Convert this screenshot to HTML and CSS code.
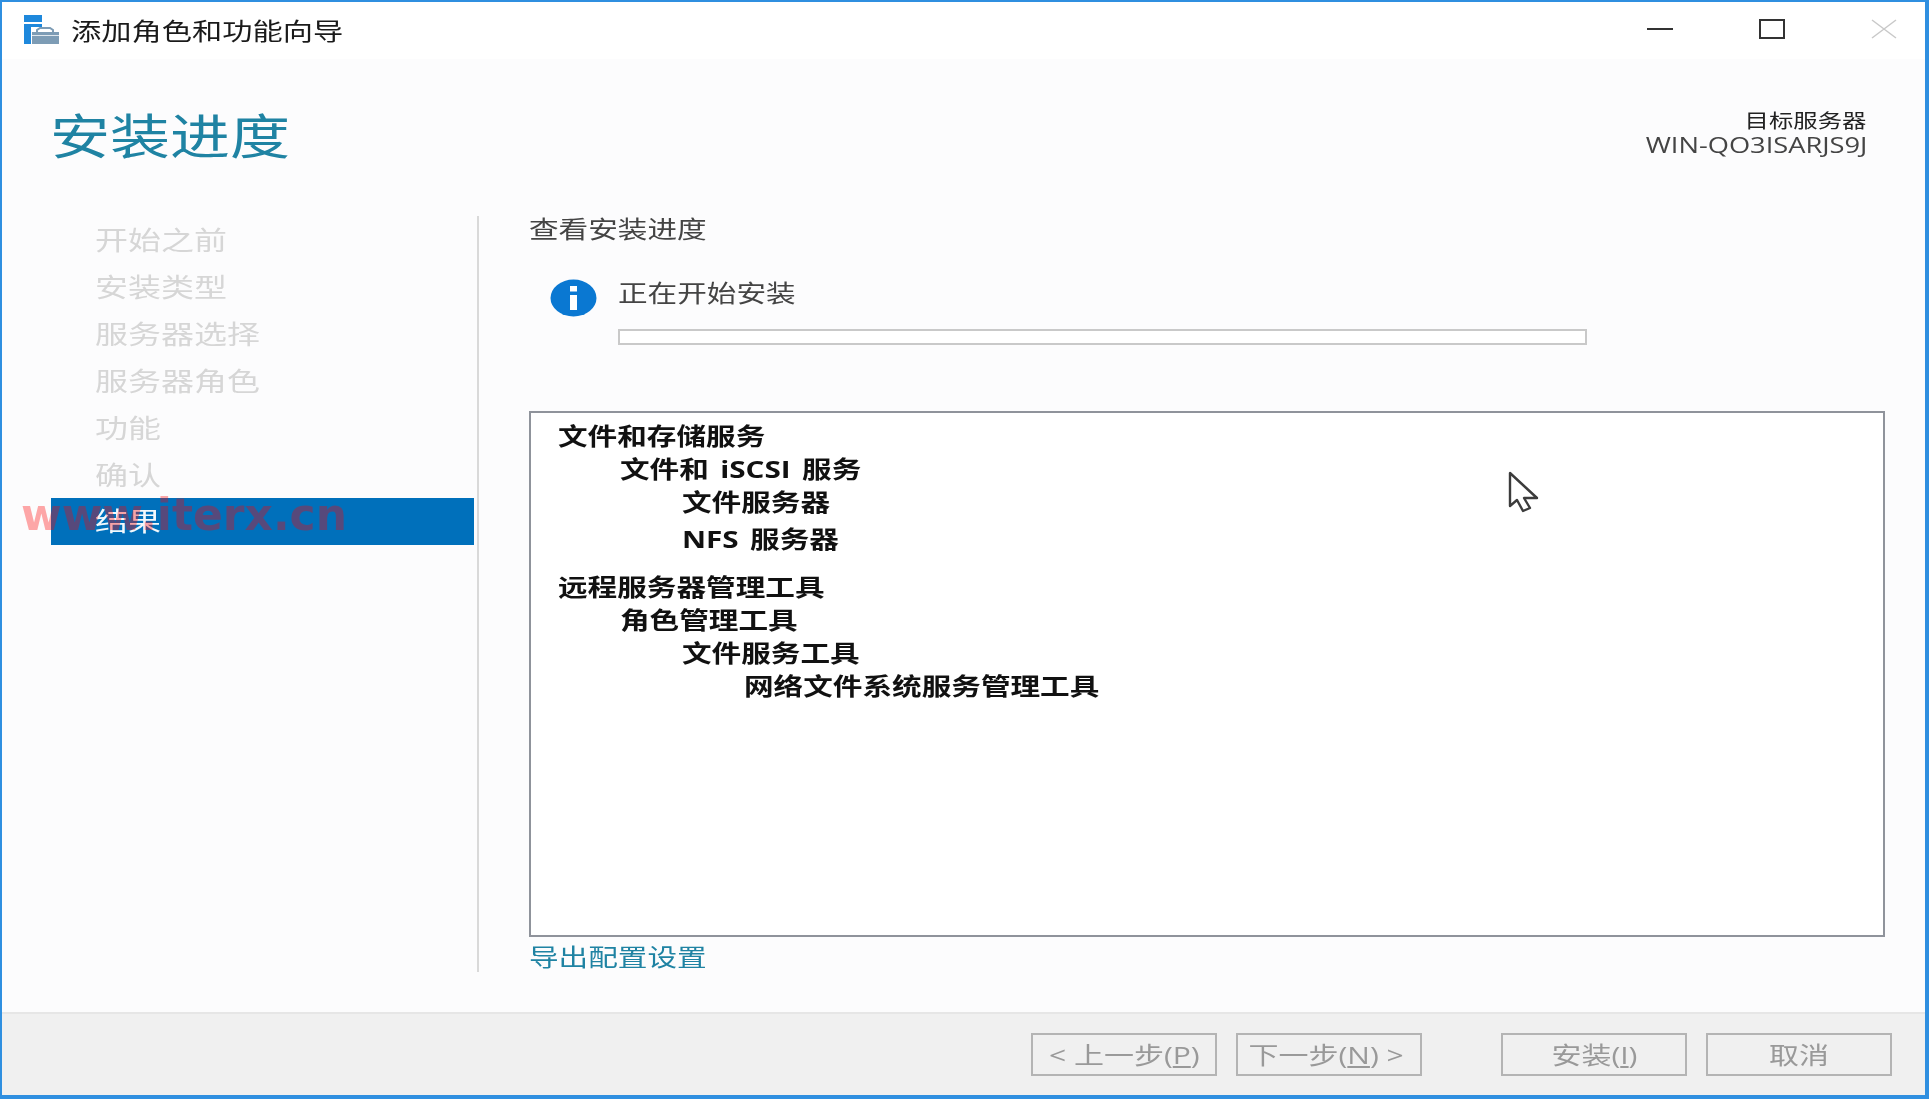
FILE: index.html
```html
<!DOCTYPE html>
<html lang="zh-CN">
<head>
    <meta charset="UTF-8">
    <title>添加角色和功能向导</title>
    <link rel="stylesheet" href="styles.css">
</head>
<body>
    <div class="window">
        <div class="titlebar">
            <svg class="app-icon" width="38" height="30" viewBox="0 0 38 30">
                <rect x="1" y="0" width="18" height="7" fill="#1e88dc"/>
                <rect x="1" y="9" width="7" height="20" fill="#1e88dc"/>
                <rect x="8" y="9" width="11" height="3" fill="#1e88dc"/>
                <path d="M14 18v-3l3-2h10l3 2v3z" fill="none" stroke="#7d9cb5" stroke-width="2"/>
                <rect x="9" y="17" width="27" height="12" fill="#7d9cb5"/>
                <path d="M9 20.5h27" stroke="#dfe7ee" stroke-width="1"/>
            </svg>
            <span class="wide title-text">添加角色和功能向导</span>
            <div class="win-controls">
                <svg class="ctl-min" width="26" height="20" viewBox="0 0 26 20"><path d="M0 10h26" stroke="#333" stroke-width="2"/></svg>
                <svg class="ctl-max" width="26" height="20" viewBox="0 0 26 20"><rect x="1" y="1" width="24" height="18" fill="none" stroke="#333" stroke-width="2"/></svg>
                <svg class="ctl-close" width="26" height="20" viewBox="0 0 26 20"><path d="M1 1l24 18M25 1L1 19" stroke="#c9c9c9" stroke-width="1.5" fill="none"/></svg>
            </div>
        </div>

        <div class="main">
            <div class="header">
                <h1 class="wide page-title">安装进度</h1>
                <div class="target">
                    <div class="wide-r">目标服务器</div>
                    <div class="wide-r target-name">WIN-QO3ISARJS9J</div>
                </div>
            </div>

            <div class="columns">
                <ul class="steps">
                    <li><span class="wide">开始之前</span></li>
                    <li><span class="wide">安装类型</span></li>
                    <li><span class="wide">服务器选择</span></li>
                    <li><span class="wide">服务器角色</span></li>
                    <li><span class="wide">功能</span></li>
                    <li><span class="wide">确认</span></li>
                    <li class="active"><span class="wide">结果</span></li>
                </ul>
                <div class="divider"></div>
                <div class="content">
                    <div class="wide content-head">查看安装进度</div>
                    <div class="status">
                        <svg class="info-icon" width="47" height="38" viewBox="0 0 47 38">
                            <ellipse cx="23.5" cy="19" rx="23" ry="18.5" fill="#0a78d2"/>
                            <rect x="20" y="16" width="7" height="15" fill="#fff"/>
                            <rect x="20" y="7" width="7" height="5.5" fill="#fff"/>
                        </svg>
                        <div class="status-body">
                            <div class="wide status-text">正在开始安装</div>
                            <div class="progress"></div>
                        </div>
                    </div>
                    <div class="tree">
                        <div class="node"><span class="wide">文件和存储服务</span></div>
                        <div class="node lv2"><span class="wide">文件和 iSCSI 服务</span></div>
                        <div class="node lv3"><span class="wide">文件服务器</span></div>
                        <div class="node lv3 gap-sm"><span class="wide">NFS 服务器</span></div>
                        <div class="node gap-lg"><span class="wide">远程服务器管理工具</span></div>
                        <div class="node lv2"><span class="wide">角色管理工具</span></div>
                        <div class="node lv3"><span class="wide">文件服务工具</span></div>
                        <div class="node lv4"><span class="wide">网络文件系统服务管理工具</span></div>
                    </div>
                    <div class="export-link"><span class="wide">导出配置设置</span></div>
                </div>
            </div>
        </div>

        <div class="footer">
            <div class="btn"><span class="wide-c">&lt; 上一步(<u>P</u>)</span></div>
            <div class="btn btn-next"><span class="wide-c">下一步(<u>N</u>) &gt;</span></div>
            <div class="btn btn-install"><span class="wide-c">安装(<u>I</u>)</span></div>
            <div class="btn"><span class="wide-c">取消</span></div>
        </div>

        <!-- things sitting on top of the window -->
        <div class="watermark">www.iterx.cn</div>
        <svg class="cursor" width="34" height="42" viewBox="0 0 34 42">
            <path d="M3 2v33l7-6 6 11 7-3-6-10h13z" fill="#fff" stroke="#3c3c3c" stroke-width="2.4" stroke-linejoin="round"/>
        </svg>
    </div>
</body>
</html>
```

FILE: styles.css
```css
* {
    box-sizing: border-box;
}
html, body {
    margin: 0;
    padding: 0;
    height: 100%;
    overflow: hidden;
}
body {
    background: #1a3a5c;
    font-family: "Open Sans", "Noto Sans CJK SC", sans-serif;
    color: #333;
}
.window {
    position: relative;
    height: 1099px;
    display: flex;
    flex-direction: column;
    overflow: hidden;
    background: #fcfcfd;
    border-top: 2px solid #2f8fe0;
    border-left: 2px solid #2f8fe0;
    border-right: 4px solid #2f8fe0;
    border-bottom: 4px solid #2f8fe0;
}
.titlebar, .main, .footer, .watermark, .cursor {
    filter: blur(0.7px);
}

/* the screenshot is stretched sideways, so the text is too */
.wide, .wide-r, .wide-c {
    display: inline-block;
    white-space: pre;
    transform: scaleX(1.25);
}
.wide {
    transform-origin: left center;
}
.wide-r {
    transform-origin: right center;
}
.wide-c {
    transform-origin: center center;
}

.titlebar {
    height: 57px;
    flex: none;
    display: flex;
    align-items: center;
    background: #fff;
    padding-left: 21px;
}
.app-icon {
    margin-top: -2px;
}
.title-text {
    margin-left: 10px;
    font-size: 24.2px;
    line-height: 30px;
    color: #1a1a1a;
}
.win-controls {
    margin-left: auto;
    display: flex;
    gap: 86px;
    padding-right: 28px;
    margin-top: -3px;
}

.main {
    flex: 1;
    display: flex;
    flex-direction: column;
}
.header {
    height: 157px;
    flex: none;
    display: flex;
    justify-content: space-between;
    padding: 47px 58px 0 48px;
}
.page-title {
    margin: 0;
    font-size: 48px;
    line-height: 60px;
    font-weight: 400;
    color: #1f83a3;
    height: 60px;
}
.target {
    display: flex;
    flex-direction: column;
    align-items: flex-end;
    font-size: 19.5px;
    line-height: 24px;
    padding-top: 3px;
    color: #222;
}
.target-name {
    font-size: 21.8px;
    color: #444;
}

.columns {
    display: flex;
    height: 756px;
    flex: none;
}
.steps {
    list-style: none;
    margin: 0 0 0 49px;
    padding: 1px 0 0;
    width: 423px;
    font-size: 26.4px;
    color: #d6d6d6;
}
.steps li {
    height: 47px;
    line-height: 47px;
    padding-left: 44px;
}
.steps .active {
    margin-top: -1px;
    background: #0070bb;
    color: #f2f8fc;
}
.divider {
    width: 2px;
    margin-left: 3px;
    background: #d9d9d9;
}
.content {
    width: 1356px;
    margin-left: 50px;
}
.content-head {
    display: block;
    font-size: 23.7px;
    line-height: 26px;
    color: #444;
}
.status {
    display: flex;
    margin: 38px 0 0 21px;
}
.status-body {
    margin-left: 21px;
}
.status-text {
    display: block;
    font-size: 23.7px;
    line-height: 26px;
    color: #444;
}
.info-icon {
    margin-top: -1px;
}
.progress {
    width: 969px;
    height: 16px;
    margin-top: 23px;
    background: #fff;
    border: 2px solid #c9c9c9;
}
.tree {
    height: 526px;
    margin-top: 66px;
    padding: 7px 0 0 27px;
    background: #fff;
    border: 2px solid #8f939b;
    font-size: 23.7px;
    font-weight: 700;
    word-spacing: 3px;
    color: #111;
}
.node {
    line-height: 33px;
    height: 33px;
}
.lv2 {
    padding-left: 62px;
}
.lv3 {
    padding-left: 124px;
}
.lv4 {
    padding-left: 186px;
}
.gap-sm {
    margin-top: 4px;
}
.gap-lg {
    margin-top: 15px;
}
.export-link {
    margin-top: 7px;
    font-size: 23.7px;
    line-height: 26px;
    color: #1f83a3;
}

.footer {
    height: 83px;
    margin-top: 40px;
    flex: none;
    display: flex;
    gap: 19px;
    padding: 19px 0 0 1029px;
    background: #f0f0f0;
    border-top: 2px solid #e6e6e6;
}
.btn {
    width: 186px;
    height: 43px;
    border: 2px solid #b4b4b4;
    font-size: 24px;
    line-height: 39px;
    text-align: center;
    color: #999;
}
.btn-next {
    padding-right: 6px;
}
.btn-install {
    margin-left: 60px;
}

.watermark {
    position: absolute;
    left: 19px;
    top: 488px;
    font-family: "DejaVu Sans", sans-serif;
    font-size: 44px;
    font-weight: 700;
    line-height: 50px;
    color: rgba(255, 0, 0, 0.34);
    white-space: pre;
}
.cursor {
    position: absolute;
    left: 1505px;
    top: 469px;
}
```
